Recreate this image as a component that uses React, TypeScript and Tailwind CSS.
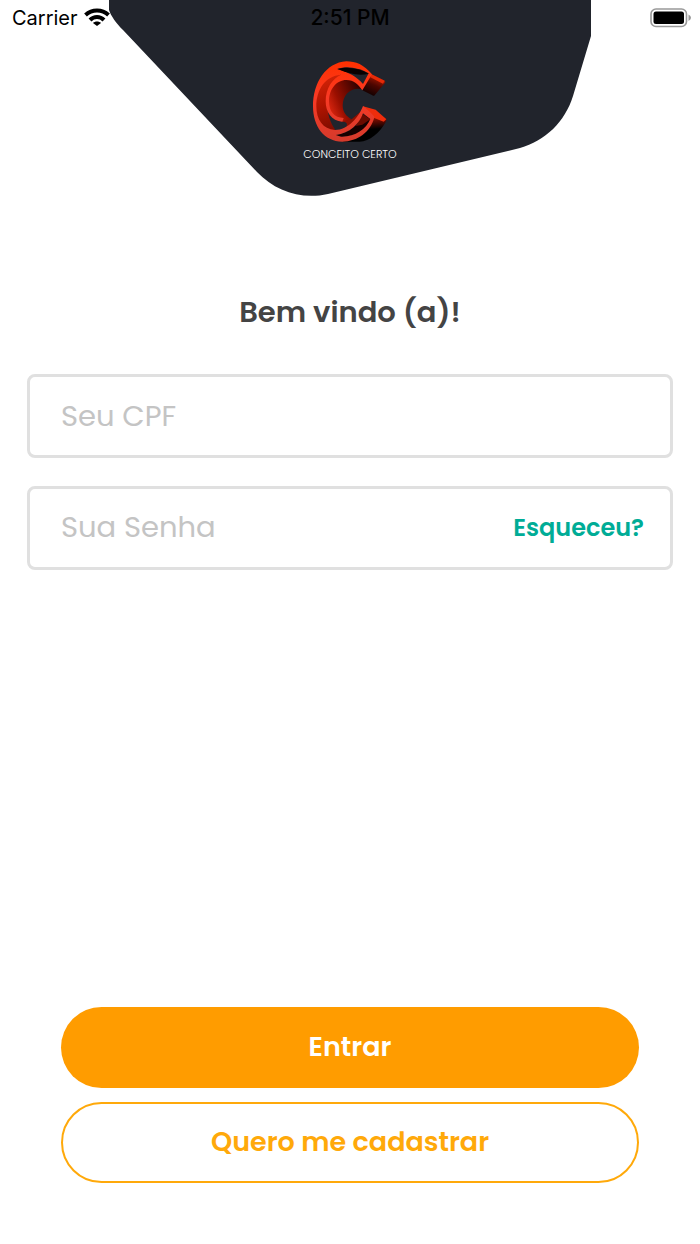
import React, { useState } from 'react';

const LogoMark = () => (
  <svg viewBox="0 0 246 258" className="h-[86px] w-[82px]" aria-hidden="true">
    <defs>
      <linearGradient id="face" x1="0" y1="0" x2="0" y2="1">
        <stop offset="0" stopColor="#ff3000" />
        <stop offset="0.45" stopColor="#f93a25" />
        <stop offset="1" stopColor="#d43a2c" />
      </linearGradient>
      <linearGradient id="groove" x1="0.4" y1="0" x2="0.6" y2="1">
        <stop offset="0" stopColor="#d42408" />
        <stop offset="0.5" stopColor="#b01400" />
        <stop offset="1" stopColor="#7a0c00" />
      </linearGradient>
      <linearGradient id="wall" x1="0" y1="0.7" x2="1" y2="0.2">
        <stop offset="0" stopColor="#e62a12" />
        <stop offset="0.35" stopColor="#9a0f00" />
        <stop offset="1" stopColor="#250000" />
      </linearGradient>
      <linearGradient id="tipTop" x1="0.8" y1="0.1" x2="0.4" y2="1">
        <stop offset="0" stopColor="#b81a00" />
        <stop offset="0.5" stopColor="#4d0600" />
        <stop offset="1" stopColor="#120000" />
      </linearGradient>
      <linearGradient id="tipBottom" x1="0.6" y1="0" x2="0.7" y2="1">
        <stop offset="0.1" stopColor="#e62400" />
        <stop offset="0.45" stopColor="#5a0800" />
        <stop offset="0.65" stopColor="#000000" />
      </linearGradient>
    </defs>
    {/* extruded sides */}
    <path d="M186 48L227 68Q231 71 227 76L197 112Q194 115 190 112L160 97Z" fill="url(#tipTop)" />
    <path d="M186 48L227 68L222 77L184 58Z" fill="#e52b08" />
    <path d="M162 145L229 180Q235 185 230 192C212 225 182 250 152 251H100L140 225L190 178Z" fill="url(#tipBottom)" />
    <path d="M162 145L200 155L232 184L224 191L190 178Z" fill="#ee2d0c" />
    <path
      d="M160 94C128 86 102 108 101 142C101 162 112 176 128 184L104 191C74 190 52 164 52 130C52 90 80 62 112 62C135 62 148 76 160 94Z"
      fill="url(#wall)"
    />
    {/* channel of the letter */}
    <path d="M104 52C62 40 22 78 20 145C20 186 38 218 76 220L78 214C64 196 54 165 54 130C55 96 74 66 108 60Z" fill="url(#groove)" />
    <path d="M98 190L128 184L158 158C146 182 134 198 116 207C108 204 124 194 98 190Z" fill="#8f0f00" />
    <path d="M80 231C122 226 150 200 161 168L186 184C174 215 135 238 95 236Z" fill="#160000" />
    <path d="M161 168L184 184L160 200L140 204Z" fill="#6a0b00" />
    {/* front edges */}
    <path
      fillRule="evenodd"
      fill="url(#face)"
      d="M189 49C165 20 140 10 112 10C50 14 12 75 12 145C12 205 45 251 100 251C145 251 185 222 196 178Q196 172 162 144C150 176 118 216 78 216C42 214 22 185 22 145C22 95 48 54 96 50C70 62 50 90 50 130C50 162 68 190 100 191L104 180C75 180 60 160 60 130C60 94 82 66 112 66C135 66 148 80 160 97ZM84 33C116 22 150 30 179 46L162 78C143 56 118 42 84 33ZM80 231C122 226 151 198 162 166L184 183C172 214 135 238 96 236Z"
    />
    <path d="M86 33C116 25 150 31 179 47C150 55 116 46 86 33Z" fill="#080000" />
  </svg>
);

const WifiIcon = () => (
  <svg viewBox="0 0 26 20" className="h-5 w-[26px]" aria-hidden="true">
    <g fill="none" stroke="#000" strokeWidth="4">
      <path d="M1.500 7C8 1 18 1 24.500 7" />
      <path d="M6 12C10 8 16 8 20 12" />
    </g>
    <path d="M9 15C11 13 15 13 17 15L13 18Z" fill="#000" />
  </svg>
);

const BatteryIcon = () => (
  <svg viewBox="0 0 42 20" className="h-5 w-[42px]" aria-hidden="true">
    <rect x="1" y="1" width="35.500" height="17.500" rx="5" fill="none" stroke="#999" strokeWidth="1.600" />
    <rect x="3.500" y="3.500" width="30.500" height="12.500" rx="2.500" fill="#000" />
    <path d="M38.500 6.500Q41 8 41 9.800Q41 11.500 38.500 13Z" fill="#999" />
  </svg>
);

const StatusBar = () => (
  <div className="relative grid h-9 grid-cols-3 items-center px-2 font-[Inter,sans-serif] text-black">
    <div className="flex items-center gap-1.5 pl-1">
      <span className="text-xl">Carrier</span>
      <WifiIcon />
    </div>
    <span className="text-center text-[21px] font-medium">2:51 PM</span>
    <div className="flex justify-end">
      <BatteryIcon />
    </div>
  </div>
);

const Header = () => (
  <header className="relative h-[196px]">
    <svg
      viewBox="0 0 482 196"
      className="absolute top-0 left-1/2 h-[196px] w-[482px] -translate-x-1/2"
      aria-hidden="true"
    >
      <path
        d="M0 0H482V36L464 96C456 122 436 141 411 148L219 194C192 200 166 191 148 172L14 30C7 23 2 16 0 10Z"
        fill="#21242c"
      />
    </svg>
    <StatusBar />
    <div className="relative flex flex-col items-center pt-[22px]">
      <LogoMark />
      <span className="text-[11px] leading-5 font-light text-white">CONCEITO CERTO</span>
    </div>
  </header>
);

export default function App() {
  const [cpf, setCpf] = useState('');
  const [password, setPassword] = useState('');

  return (
    <div className="flex min-h-screen flex-col bg-white font-[Poppins,Inter,sans-serif]">
      <Header />
      <form className="flex flex-1 flex-col" onSubmit={(e) => e.preventDefault()}>
        <h1 className="mt-24 text-center text-[29px] leading-10 font-semibold text-[#444]">Bem vindo (a)!</h1>

        <div className="mt-[42px] flex flex-col gap-7 px-[27px]">
          <input
            type="text"
            aria-label="Seu CPF"
            placeholder="Seu CPF"
            value={cpf}
            onChange={(e) => setCpf(e.target.value)}
            className="h-[84px] rounded-lg border-3 border-[#e0e0e0] px-[31px] text-[29px] outline-none placeholder:text-[#c4c4c4]"
          />
          <div className="flex h-[84px] items-center rounded-lg border-3 border-[#e0e0e0] pr-[26px] pl-[31px]">
            <input
              type="password"
              aria-label="Sua Senha"
              placeholder="Sua Senha"
              value={password}
              onChange={(e) => setPassword(e.target.value)}
              className="min-w-0 flex-1 text-[29px] outline-none placeholder:text-[#c4c4c4]"
            />
            <a href="#esqueceu" className="text-2xl font-semibold text-[#00ac96]">
              Esqueceu?
            </a>
          </div>
        </div>

        <div className="mt-auto flex flex-col gap-3.5 px-[61px] pt-10 pb-[61px] text-[27px] font-semibold">
          <button type="submit" className="h-[81px] rounded-full bg-[#ff9c00] text-white">
            Entrar
          </button>
          <button type="button" className="h-[81px] rounded-full border-2 border-[#ffa90a] text-[#ffa90a]">
            Quero me cadastrar
          </button>
        </div>
      </form>
    </div>
  );
}
